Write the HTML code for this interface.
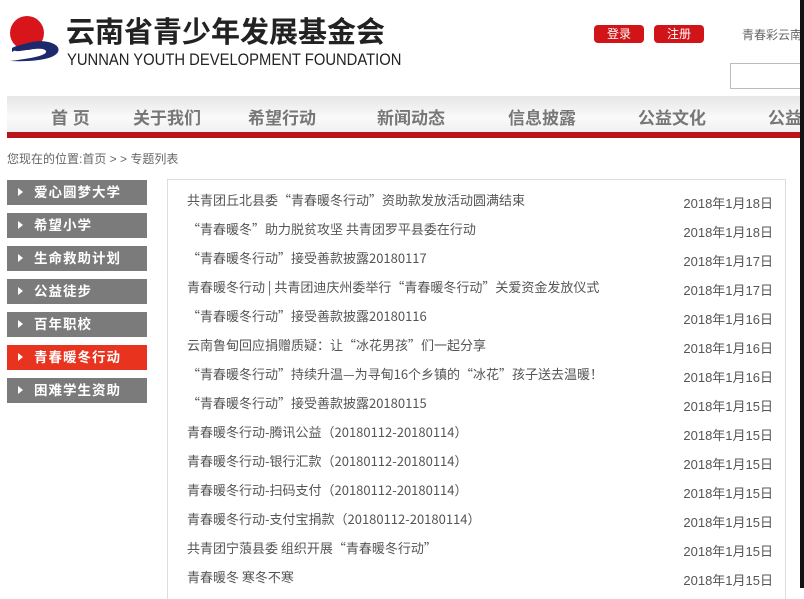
<!DOCTYPE html>
<html><head><meta charset="utf-8"><style>
*{margin:0;padding:0;box-sizing:border-box}
body{width:804px;height:588px;overflow:hidden;background:#fff;font-family:"Liberation Sans","Noto Sans CJK SC",sans-serif;position:relative}
.a{position:absolute}
.title{left:66px;top:10px;font-size:29px;font-weight:bold;color:#222;white-space:nowrap;line-height:40px;font-family:"Noto Sans CJK SC",sans-serif}
.en{left:67px;top:50px;font-size:17px;color:#222;white-space:nowrap;transform:scaleX(0.87);transform-origin:0 0;line-height:20px}
.btn{top:25px;height:18px;width:50px;background:#d01418;border-radius:4px;color:#fff;font-size:12px;text-align:center;line-height:18px}
.nav{left:7px;top:96px;width:797px;height:36px;background:linear-gradient(#e6e6e6,#fafafa 60%,#f0f0f0)}
.red{left:7px;top:132px;width:797px;height:6px;background:#b8141c}
.ni{top:104px;font-size:17px;font-weight:bold;color:#777;white-space:nowrap}
.crumb{left:7px;top:150px;font-size:12px;color:#666}
.sb{left:7px;width:140px;height:25px;background:#7b7b7b;color:#fff;font-size:13.5px;font-weight:bold;line-height:25px;padding-left:27px;letter-spacing:1px}
.sb:before{content:"";position:absolute;left:11px;top:8px;border-left:5px solid #fff;border-top:4.5px solid transparent;border-bottom:4.5px solid transparent}
.box{left:167px;top:179px;width:619px;height:420px;border:1px solid #ddd;border-bottom:none}
.r{left:187px;font-size:13px;color:#555;white-space:nowrap;font-family:"Noto Sans CJK SC",sans-serif;line-height:17px}
.d{right:31px;font-size:13px;color:#555;white-space:nowrap;line-height:17px}
</style></head><body>
<svg class="a" style="left:6px;top:14px" width="60" height="52" viewBox="0 0 60 52">
<circle cx="21" cy="19" r="17" fill="#d8151b"/>
<path d="M22 29 C38 24 56 30 52 38 C48 45 30 48 4 47 C20 45 42 42 40 37 C38 33 26 35 14 37 C5 38 4 33 22 29Z" fill="#1c2a6b"/>
<path d="M6 34 C14 30 22 30 28 32 C20 32 12 34 6 38Z" fill="#1c2a6b"/>
</svg>
<div class="a title">云南省青少年发展基金会</div>
<div class="a en">YUNNAN YOUTH DEVELOPMENT FOUNDATION</div>
<div class="a btn" style="left:594px">登录</div>
<div class="a btn" style="left:654px">注册</div>
<div class="a" style="left:742px;top:26px;font-size:12px;color:#666;white-space:nowrap">青春彩云南</div>
<div class="a" style="left:730px;top:63px;width:80px;height:26px;border:1px solid #bbb"></div>
<div class="a nav"></div>
<div class="a red"></div>
<div class="a ni" style="left:51px">首 页</div>
<div class="a ni" style="left:133px">关于我们</div>
<div class="a ni" style="left:248px">希望行动</div>
<div class="a ni" style="left:377px">新闻动态</div>
<div class="a ni" style="left:508px">信息披露</div>
<div class="a ni" style="left:638px">公益文化</div>
<div class="a ni" style="left:768px">公益</div>
<div class="a crumb">您现在的位置:首页 &gt; &gt; 专题列表</div>
<div class="a" style="left:800px;top:0;width:4px;height:588px;background:#111"></div>
<div class="a sb" style="top:180px">爱心圆梦大学</div>
<div class="a sb" style="top:213px">希望小学</div>
<div class="a sb" style="top:246px">生命救助计划</div>
<div class="a sb" style="top:279px">公益徒步</div>
<div class="a sb" style="top:312px">百年职校</div>
<div class="a sb" style="top:345px;background:#e8331f">青春暖冬行动</div>
<div class="a sb" style="top:378px">困难学生资助</div>
<div class="a box"></div>
<div class="a r" style="top:191px">共青团丘北县委“青春暖冬行动”资助款发放活动圆满结束</div><div class="a d" style="top:195px">2018年1月18日</div>
<div class="a r" style="top:220px">“青春暖冬”助力脱贫攻坚 共青团罗平县委在行动</div><div class="a d" style="top:224px">2018年1月18日</div>
<div class="a r" style="top:249px">“青春暖冬行动”接受善款披露20180117</div><div class="a d" style="top:253px">2018年1月17日</div>
<div class="a r" style="top:278px">青春暖冬行动 | 共青团迪庆州委举行“青春暖冬行动”关爱资金发放仪式</div><div class="a d" style="top:282px">2018年1月17日</div>
<div class="a r" style="top:307px">“青春暖冬行动”接受善款披露20180116</div><div class="a d" style="top:311px">2018年1月16日</div>
<div class="a r" style="top:336px">云南鲁甸回应捐赠质疑：让“冰花男孩”们一起分享</div><div class="a d" style="top:340px">2018年1月16日</div>
<div class="a r" style="top:365px">“青春暖冬行动”持续升温—为寻甸16个乡镇的“冰花”孩子送去温暖！</div><div class="a d" style="top:369px">2018年1月16日</div>
<div class="a r" style="top:394px">“青春暖冬行动”接受善款披露20180115</div><div class="a d" style="top:398px">2018年1月15日</div>
<div class="a r" style="top:423px">青春暖冬行动-腾讯公益（20180112-20180114）</div><div class="a d" style="top:427px">2018年1月15日</div>
<div class="a r" style="top:452px">青春暖冬行动-银行汇款（20180112-20180114）</div><div class="a d" style="top:456px">2018年1月15日</div>
<div class="a r" style="top:481px">青春暖冬行动-扫码支付（20180112-20180114）</div><div class="a d" style="top:485px">2018年1月15日</div>
<div class="a r" style="top:510px">青春暖冬行动-支付宝捐款（20180112-20180114）</div><div class="a d" style="top:514px">2018年1月15日</div>
<div class="a r" style="top:539px">共青团宁蒗县委 组织开展“青春暖冬行动”</div><div class="a d" style="top:543px">2018年1月15日</div>
<div class="a r" style="top:568px">青春暖冬 寒冬不寒</div><div class="a d" style="top:572px">2018年1月15日</div>
</body></html>
